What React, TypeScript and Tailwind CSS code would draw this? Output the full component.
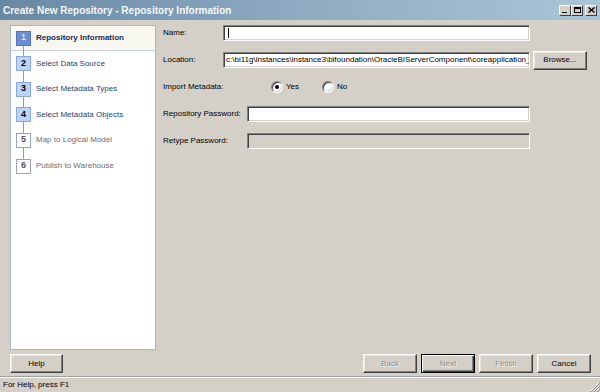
import React from 'react';

const steps = [
  { n: 1, label: 'Repository Information', state: 'current', h: 'h-[25px]' },
  { n: 2, label: 'Select Data Source', state: 'done', h: 'h-[25px]' },
  { n: 3, label: 'Select Metadata Types', state: 'done', h: 'h-[26px]' },
  { n: 4, label: 'Select Metadata Objects', state: 'done', h: 'h-[25px]' },
  { n: 5, label: 'Map to Logical Model', state: 'todo', h: 'h-[26px]' },
  { n: 6, label: 'Publish to Warehouse', state: 'todo', h: 'h-[26px]' },
];

const boxClass: Record<string, string> = {
  current: 'bg-[#6b8fd2] border-[#5274b8] text-white',
  done: 'bg-[#b9d4f4] border-[#88a8d6] text-black font-bold',
  todo: 'bg-white border-[#9aa5b1] text-[#555] font-bold',
};

const textClass: Record<string, string> = {
  current: 'font-bold text-[#1b2a5a]',
  done: 'text-[#2d3f6e]',
  todo: 'text-[#6d6d6d]',
};

const sunken =
  'border border-t-[#808080] border-l-[#808080] border-b-white border-r-white shadow-[inset_1px_1px_0_#404040,inset_-1px_-1px_0_#d4d0c8]';

const Button = ({ label, disabled, focused, w = 'w-[54px]' }: { label: string; disabled?: boolean; focused?: boolean; w?: string }) => (
  <button
    className={`${w} h-[19px] flex items-center justify-center bg-[#d4d0c8] ${
      focused
        ? 'border border-black shadow-[inset_1px_1px_0_#fff,inset_-1px_-1px_0_#404040,inset_-2px_-2px_0_#808080]'
        : 'border border-t-white border-l-white border-b-[#404040] border-r-[#404040] shadow-[inset_-1px_-1px_0_#808080,inset_1px_1px_0_#e8e6e0]'
    } ${disabled ? 'text-[#8f8c85] [text-shadow:1px_1px_0_#f4f3f0]' : 'text-black'}`}
  >
    {label}
  </button>
);

const Radio = ({ checked }: { checked?: boolean }) => (
  <div className="w-[12px] h-[12px] rounded-full bg-white border border-t-[#808080] border-l-[#808080] border-b-white border-r-white shadow-[inset_1px_1px_0_#404040,inset_-1px_-1px_0_#d4d0c8] flex items-center justify-center">
    {checked && <div className="w-[4px] h-[4px] rounded-full bg-black" />}
  </div>
);

const WinBtn = ({ children }: { children: React.ReactNode }) => (
  <div className="w-[12px] h-[11px] bg-[#d4d0c8] border border-t-white border-l-white border-b-[#404040] border-r-[#404040] flex items-center justify-center">
    {children}
  </div>
);

export default function App() {
  return (
    <div className="w-[600px] h-[392px] bg-[#d4d0c8] flex flex-col overflow-hidden font-['Liberation_Sans',Arial,sans-serif] text-[8px] text-black">
      {/* Title bar */}
      <div className="h-[20px] flex items-center justify-between pl-[3px] pr-[3px] bg-linear-to-r from-[#6888a4] via-[#8eabc2] to-[#aac5d7]">
        <span className="text-[10px] font-bold text-[#f4f7fa]">
          Create New Repository - Repository Information
        </span>
        <div className="flex items-center">
          <WinBtn>
            <div className="w-[5px] h-[1.5px] bg-black mt-[5px] -ml-[1px]" />
          </WinBtn>
          <WinBtn>
            <div className="w-[7px] h-[6px] border border-black border-t-2" />
          </WinBtn>
          <div className="w-[2px]" />
          <WinBtn>
            <svg width="7" height="6" viewBox="0 0 7 6">
              <path d="M0.5 0.5 L6.5 5.5 M6.5 0.5 L0.5 5.5" stroke="#000" strokeWidth="1.4" />
            </svg>
          </WinBtn>
        </div>
      </div>

      {/* Content */}
      <div className="h-[330px] flex items-start pl-[10px]">
        {/* Steps panel */}
        <div className="mt-[5px] w-[146px] h-[325px] bg-white border border-[#a9b8c9]">
          <div className="relative">
            <div className="absolute left-[12px] top-[14px] h-[124px] w-px bg-[#8c9bb0]" />
            {steps.map((s, i) => (
              <div
                key={s.n}
                className={`${s.h} flex items-center pl-[5px] ${
                  i === 0 ? 'bg-[#f8f8f0] border-b border-[#c8d2dc]' : ''
                }`}
              >
                <div
                  className={`relative w-[15px] h-[15px] border flex items-center justify-center text-[9px] ${boxClass[s.state]}`}
                >
                  {s.n}
                </div>
                <span className={`ml-[5px] ${textClass[s.state]}`}>{s.label}</span>
              </div>
            ))}
          </div>
        </div>

        {/* Form */}
        <div className="ml-[7px] mt-[4px] flex flex-col gap-[9px]">
          <div className="h-[18px] flex items-center">
            <span className="w-[60px]">Name:</span>
            <div className={`w-[307px] h-[16px] bg-white flex items-center ${sunken}`}>
              <span className="ml-[4px] w-px h-[10px] bg-black" />
            </div>
          </div>
          <div className="h-[18px] flex items-center">
            <span className="w-[60px]">Location:</span>
            <div className={`w-[307px] h-[16px] bg-white flex items-center overflow-hidden whitespace-nowrap ${sunken}`}>
              <span className="ml-[2px]">c:\bi11g\instances\instance3\bifoundation\OracleBIServerComponent\coreapplication_</span>
            </div>
            <div className="ml-[3px]">
              <Button label="Browse..." w="w-[54px]" />
            </div>
          </div>
          <div className="h-[18px] flex items-center">
            <span className="w-[108px]">Import Metadata:</span>
            <Radio checked />
            <span className="ml-[3px] w-[36px]">Yes</span>
            <Radio />
            <span className="ml-[3px]">No</span>
          </div>
          <div className="h-[18px] flex items-center">
            <span className="w-[84px]">Repository Password:</span>
            <div className={`w-[283px] h-[16px] bg-white ${sunken}`} />
          </div>
          <div className="h-[18px] flex items-center">
            <span className="w-[84px]">Retype Password:</span>
            <div className={`w-[283px] h-[16px] bg-[#d4d0c8] ${sunken}`} />
          </div>
        </div>
      </div>

      {/* Button row */}
      <div className="h-[26px] flex items-start pt-[4px] pl-[10px] pr-[9px] justify-between">
        <Button label="Help" w="w-[53px]" />
        <div className="flex gap-[4px]">
          <Button label="Back" disabled />
          <Button label="Next" disabled focused />
          <Button label="Finish" disabled />
          <Button label="Cancel" />
        </div>
      </div>

      {/* Status bar */}
      <div className="flex-1 flex items-center justify-between border-t border-[#a0a0a0] shadow-[inset_0_1px_0_#fff] pl-[3px]">
        <span>For Help, press F1</span>
        <svg width="12" height="12" viewBox="0 0 12 12" className="self-end">
          <path d="M11 3 L3 11 M11 6 L6 11 M11 9 L9 11" stroke="#fff" strokeWidth="1" />
          <path d="M12 3 L3 12 M12 6 L6 12 M12 9 L9 12" stroke="#808080" strokeWidth="1" />
        </svg>
      </div>
    </div>
  );
}
